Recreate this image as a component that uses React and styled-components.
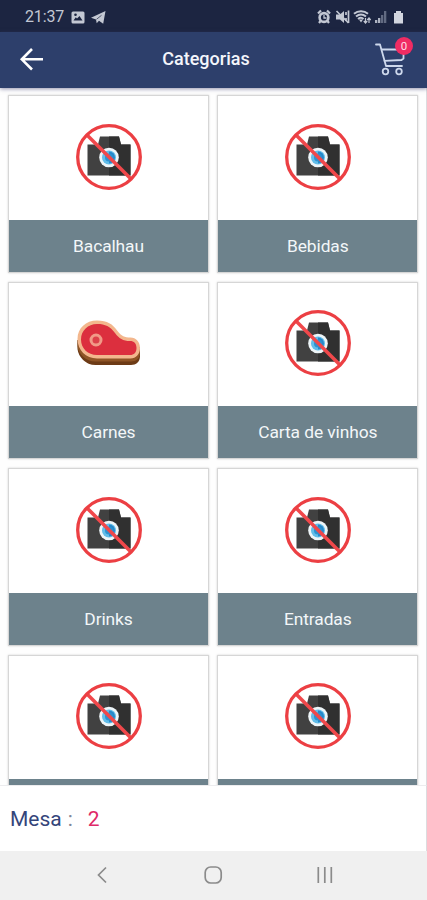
import React from 'react'
import styled, { createGlobalStyle } from 'styled-components';

const GlobalStyle = createGlobalStyle`
  * {
    box-sizing: border-box;
  }
  body {
    margin: 0;
    background: #fefefe;
    font-family: Roboto, "Liberation Sans", sans-serif;
  }
`;

const Screen = styled.div`
  display: flex;
  flex-direction: column;
  width: 427px;
  height: 900px;
  overflow: hidden;
`;

const StatusBar = styled.div`
  display: flex;
  align-items: center;
  flex: 0 0 32px;
  padding: 2px 22px 0 25px;
  background: #1c2541;
  color: #c3c8d3;
`;

const Clock = styled.span`
  width: 40px;
  margin-right: 6px;
  font-size: 16px;
  line-height: 20px;
  letter-spacing: -0.15px;
`;

const StatusIcons = styled.div`
  display: flex;
  align-items: center;
  gap: 6px;
  margin-left: ${props => props.$right ? 'auto' : '0'};
`;

const Header = styled.header`
  display: grid;
  grid-template-columns: 60px 1fr 75px;
  align-items: center;
  flex: 0 0 56px;
  padding-bottom: 2px;
  background: #2d3f6b;
  box-shadow: 0 1px 4px rgba(60, 60, 110, 0.55);
  z-index: 1;
`;

const IconButton = styled.button`
  display: flex;
  padding: 0;
  border: 0;
  background: none;
`;

const BackButton = styled(IconButton)`
  margin-left: 19px;
`;

const CartButton = styled(IconButton)`
  position: relative;
  margin: 2px 0 0 23px;
`;

const Badge = styled.span`
  position: absolute;
  top: -6px;
  left: 20px;
  width: 18px;
  height: 18px;
  border-radius: 50%;
  background: #f02c63;
  color: #ffdce6;
  font-family: Roboto, sans-serif;
  font-size: 11.5px;
  line-height: 18px;
  text-align: center;
`;

const Title = styled.h1`
  margin: 0;
  color: #f4f6fb;
  font-size: 18px;
  font-weight: 500;
  line-height: 24px;
  text-align: center;
`;

const Content = styled.main`
  flex: 1;
  min-height: 0;
  overflow: hidden;
  padding: 8.1px 8.5px 0 9px;
  border-right: 1px solid #dcdcdf;
`;

const Grid = styled.div`
  display: grid;
  grid-template-columns: 199px 199px;
  grid-auto-rows: 175.5px;
  gap: 11px 10.3px;
`;

const Card = styled.div`
  display: flex;
  flex-direction: column;
  background: #fff;
  box-shadow: 0 0 0 1px #d6d6d6, 0 0 2px 1px rgba(0, 0, 0, 0.18);
`;

const CardImage = styled.div`
  display: flex;
  align-items: center;
  justify-content: center;
  flex: 1;
  padding-bottom: 2px;
`;

const CardLabel = styled.div`
  flex: 0 0 52px;
  background: #6d828c;
  color: #f3f7f9;
  font-size: 17.4px;
  line-height: 52px;
  letter-spacing: -0.1px;
  text-align: center;
`;

const Footer = styled.footer`
  display: flex;
  align-items: center;
  flex: 0 0 66px;
  padding: 1px 0 0 10px;
  border-top: 1px solid #ececee;
  border-right: 1px solid #dcdcdf;
  background: #fff;
  color: #34457a;
  font-size: 21px;
`;

const Colon = styled.span`
  margin-left: 6px;
  color: #7f8699;
`;

const TableNumber = styled.span`
  margin-left: 15px;
  color: #df2a68;
`;

const NavBar = styled.nav`
  display: flex;
  align-items: center;
  justify-content: space-between;
  flex: 0 0 49px;
  padding: 0 92px 2px 92px;
  background: #f0f0f0;
`;

function NoPhoto() {
  return (
    <svg width="68" height="68" viewBox="0 0 68 68">
      <path d="M12.500 21.500h10.500l2-8h19l2 8h9.500v31h-43z" fill="#414141" />
      <path d="M34 13.500h10l2 8h9.500v31H34z" fill="#303030" />
      <circle cx="34" cy="34.500" r="9.800" fill="#eef5f8" />
      <circle cx="34" cy="34.500" r="7" fill="#62bde9" />
      <path d="M34 28.500a6 6 0 0 1 0 12z" fill="#2688c9" />
      <circle cx="34" cy="34.500" r="4" fill="#2d91d0" />
      <path d="M12 12l44 44" stroke="#f0484b" strokeWidth="3.600" />
      <circle cx="34" cy="34" r="31.300" fill="none" stroke="#ec3f43" strokeWidth="3.300" />
    </svg>
  )
}

function Steak() {
  return (
    <svg width="68" height="68" viewBox="0 0 68 68">
      <path d="M2.500 31v9c1 8 8 16 18 16h35.500c5 0 9-3.500 9-8.500v-9z" fill="#6d3b16" />
      <path d="M2.500 31v6c1 8 8 15.500 18 15.500h35.500c5 0 9-3.500 9-8.500v-6z" fill="#8f5526" />
      <path d="M22 11.500C11 11.500 2.500 19 2.500 30S11 49.500 22 49.500h33.500c5.500 0 9.500-4.500 9.500-10.500s-4-10.500-9.500-10.500c-6 0-9-1.500-13-6.500-5-7-10-10.500-20.500-10.500z" fill="#f3b78d" />
      <path d="M22 15c-9 0-16 6.500-16 15.500S13 46 22 46h33c4 0 6.500-2.500 6.500-7S59 32 55 32c-7 0-11-2.500-15-8-5-6.500-9.500-9-18-9z" fill="#dc2f3e" />
      <circle cx="21" cy="31" r="5" fill="#dc4149" stroke="#f19a87" strokeWidth="3" />
    </svg>
  )
}

function BackIcon() {
  return (
    <svg width="24" height="24" viewBox="0 0 24 24" fill="none" stroke="#fff" strokeWidth="2.600">
      <path d="M24 12.300H3M13 2L2.800 12.300 13 22.500" />
    </svg>
  )
}

function CartIcon() {
  return (
    <svg width="32" height="34" viewBox="0 0 32 34" fill="none" stroke="#cdd8ec" strokeWidth="1.800" strokeLinecap="round" strokeLinejoin="round">
      <path d="M1 1.500h4l6 21.500h16" />
      <path d="M7 6.500h21.500v9l-2 1.500-17 .8" />
      <circle cx="10.500" cy="28.500" r="2.800" />
      <circle cx="24" cy="28.500" r="2.800" />
    </svg>
  )
}

function PictureIcon() {
  return (
    <svg width="14" height="13" viewBox="0 0 14 13">
      <path fillRule="evenodd" d="M2 .5h10q1.500 0 1.500 1.500v9q0 1.500-1.500 1.500H2Q.5 12.500.5 11V2Q.5.500 2 .5zM2.500 9.500h9L8.500 5 6 7.500 4.800 6.300z" fill="#c3c8d3" />
      <circle cx="4.500" cy="3.800" r="1.300" fill="#1c2541" />
    </svg>
  )
}

function TelegramIcon() {
  return (
    <svg width="15" height="13" viewBox="0 0 15 13">
      <path d="M0 6.800L14.500 0l-2.300 12.700-4.200-3-2.300 2.500-.7-3.700z" fill="#c3c8d3" />
      <path d="M5.500 8.300l5-4" fill="none" stroke="#1c2541" strokeWidth=".7" />
    </svg>
  )
}

function SystemIcons() {
  return (
    <svg width="88" height="16" viewBox="0 0 88 16" fill="none" stroke="#c3c8d3">
      <circle cx="7" cy="8.500" r="4.400" strokeWidth="2.600" />
      <path d="M1 4.500l3-3M13 4.500l-3-3M3.500 12l-1.500 2M10.500 12l1.500 2" strokeWidth="2.200" />
      <path d="M7 6v3h2.500" strokeWidth="1.300" />
      <path d="M19 5.500h4l4-3.500v12l-4-3.500h-4z" fill="#c3c8d3" stroke="none" />
      <path d="M19.500 2l12 12" strokeWidth="1.600" />
      <path d="M29 3v3M29 9v3M31.500 1.500v12.500" strokeWidth="1.700" />
      <path d="M37 4.800c4-3.500 10-3.500 14 0M39 7.500c3-2.500 7-2.500 10 0M41 10c2-1.500 4-1.500 5.500 0" strokeWidth="2" />
      <path d="M42 10.500h4L44 13.500z" fill="#c3c8d3" stroke="none" />
      <path d="M48.500 9v5M46.800 12l1.700 2 1.700-2M52 14V9M50.300 11L52 9l1.700 2" strokeWidth="1.200" />
      <path d="M58 14v-3h2.300v3zM61 14V9h2.300v5z" fill="#aeb4c2" stroke="none" />
      <path d="M64 14V6h2.300v8zM67 14V2h2.300v12z" fill="#626b82" stroke="none" />
      <path d="M77 4h2V2h5v2h2v10.500h-9z" fill="#d2d6df" stroke="none" />
    </svg>
  )
}

const categories = ['Bacalhau', 'Bebidas', 'Carnes', 'Carta de vinhos', 'Drinks', 'Entradas', '', ''];

function App() {
  return (
    <Screen>
      <GlobalStyle />
      <StatusBar>
        <Clock>21:37</Clock>
        <StatusIcons>
          <PictureIcon />
          <TelegramIcon />
        </StatusIcons>
        <StatusIcons $right>
          <SystemIcons />
        </StatusIcons>
      </StatusBar>
      <Header>
        <BackButton><BackIcon /></BackButton>
        <Title>Categorias</Title>
        <CartButton>
          <CartIcon />
          <Badge>0</Badge>
        </CartButton>
      </Header>
      <Content>
        <Grid>
          {categories.map((name, i) => (
            <Card key={i}>
              <CardImage>{name === 'Carnes' ? <Steak /> : <NoPhoto />}</CardImage>
              <CardLabel>{name}</CardLabel>
            </Card>
          ))}
        </Grid>
      </Content>
      <Footer>
        Mesa
        <Colon>:</Colon>
        <TableNumber>2</TableNumber>
      </Footer>
      <NavBar>
        <svg width="20" height="20" viewBox="0 0 20 20" fill="none" stroke="#8b8b8b" strokeWidth="1.700">
          <path d="M14 2.500L6.500 10l7.500 7.500" />
        </svg>
        <svg width="20" height="20" viewBox="0 0 20 20" fill="none" stroke="#8b8b8b" strokeWidth="1.700">
          <rect x="1.200" y="2" width="16" height="16" rx="5.500" />
        </svg>
        <svg width="20" height="20" viewBox="0 0 20 20" fill="none" stroke="#8b8b8b" strokeWidth="1.700">
          <path d="M3.300 2v16M9.800 2v16M16.300 2v16" />
        </svg>
      </NavBar>
    </Screen>
  )
}

export default App
